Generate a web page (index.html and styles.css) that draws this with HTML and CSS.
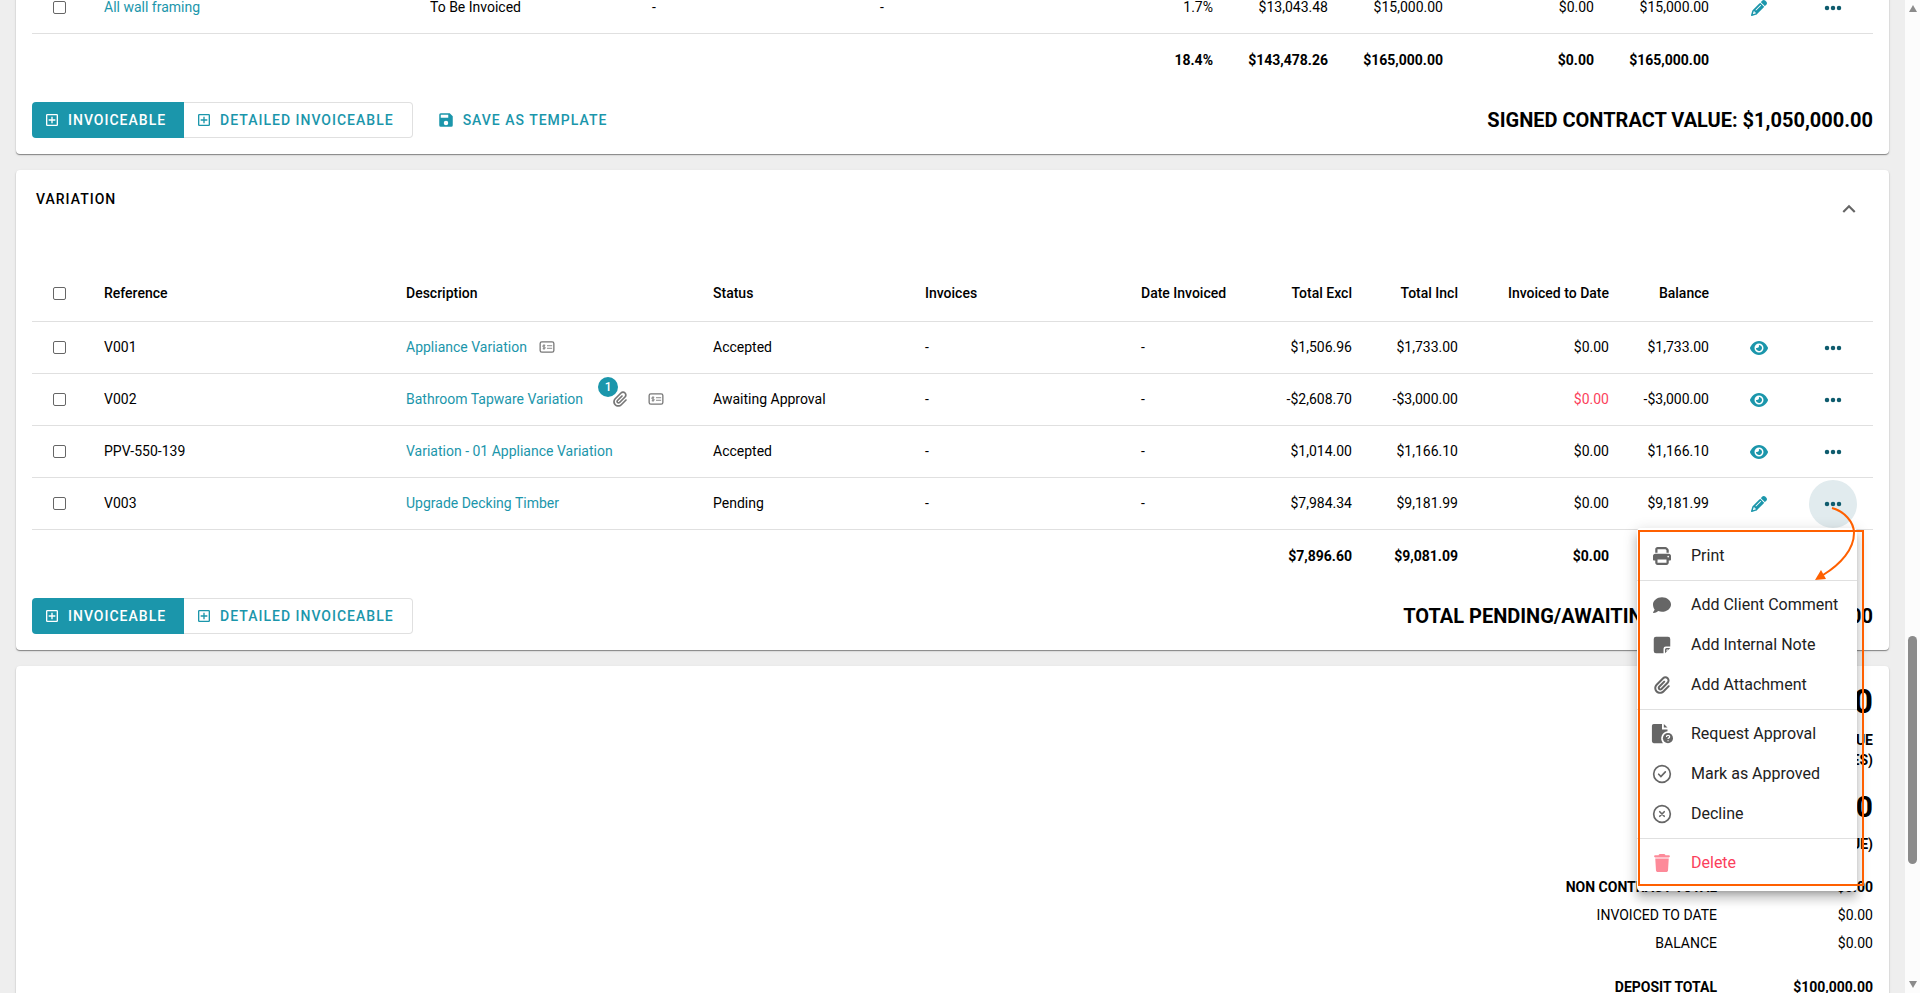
FILE: index.html
```html
<!DOCTYPE html>
<html lang="en">
<head>
    <meta charset="UTF-8">
    <meta name="viewport" content="width=device-width, initial-scale=1.0">
    <title>Quote</title>
    <link rel="stylesheet" href="styles.css">
</head>
<body>
    <!-- shared icons -->
    <svg class="sprite" aria-hidden="true">
        <symbol id="i-plus" viewBox="0 0 24 24"><path fill="currentColor" d="M5 3h14a2 2 0 0 1 2 2v14a2 2 0 0 1-2 2H5a2 2 0 0 1-2-2V5a2 2 0 0 1 2-2zm0 2v14h14V5zm6 2h2v4h4v2h-4v4h-2v-4H7v-2h4z"/></symbol>
        <symbol id="i-save" viewBox="0 0 24 24"><path fill="currentColor" d="M15 9H5V5h10m-3 14a3 3 0 0 1-3-3 3 3 0 0 1 3-3 3 3 0 0 1 3 3 3 3 0 0 1-3 3m5-16H5a2 2 0 0 0-2 2v14a2 2 0 0 0 2 2h14a2 2 0 0 0 2-2V7z"/></symbol>
        <symbol id="i-dots" viewBox="0 0 24 24"><g fill="currentColor"><circle cx="4" cy="12" r="3"/><circle cx="12" cy="12" r="3"/><circle cx="20" cy="12" r="3"/></g></symbol>
        <symbol id="i-eye" viewBox="0 0 576 512"><path fill="currentColor" d="M288 32c-80.800 0-145.500 36.800-192.600 80.600C48.600 156 17.300 208 2.500 243.700c-3.300 7.900-3.300 16.700 0 24.600C17.300 304 48.600 356 95.400 399.400C142.500 443.200 207.200 480 288 480s145.500-36.800 192.600-80.600c46.800-43.500 78.100-95.400 93-131.100c3.300-7.900 3.300-16.700 0-24.600c-14.900-35.700-46.200-87.700-93-131.100C433.500 68.800 368.800 32 288 32zM144 256a144 144 0 1 1 288 0 144 144 0 1 1-288 0zm144-64c0 35.300-28.700 64-64 64c-7.100 0-13.900-1.200-20.300-3.300c-5.500-1.800-11.900 1.600-11.700 7.400c.3 6.900 1.300 13.800 3.200 20.700c13.700 51.200 66.400 81.600 117.600 67.900s81.600-66.400 67.900-117.600c-11.100-41.500-47.800-69.400-88.600-71.100c-5.800-.2-9.200 6.100-7.400 11.700c2.100 6.400 3.300 13.200 3.300 20.300z"/></symbol>
        <symbol id="i-pencil" viewBox="0 0 512 512"><path fill="currentColor" d="M410.300 231l11.300-11.300-33.900-33.900-62.100-62.100L291.700 89.800l-11.300 11.300-22.600 22.600L58.600 322.900c-10.400 10.400-18 23.300-22.200 37.400L1 480.700c-2.500 8.400-.2 17.500 6.100 23.700s15.300 8.500 23.700 6.100l120.300-35.400c14.100-4.200 27-11.800 37.400-22.200L387.700 253.700 410.300 231zM160 399.400l-9.100 22.700c-4 3.100-8.500 5.400-13.300 6.900L59.400 452l23-78.100c1.400-4.900 3.800-9.400 6.900-13.300l22.700-9.100v32c0 8.800 7.200 16 16 16h32zM362.700 18.700L348.300 33.200 325.700 55.800 314.300 67.100l33.900 33.900 62.100 62.100 33.900 33.900 11.300-11.300 22.600-22.600 14.500-14.500c25-25 25-65.500 0-90.500L453.300 18.700c-25-25-65.500-25-90.500 0zm-47.400 168l-144 144c-6.200 6.200-16.400 6.200-22.600 0s-6.200-16.400 0-22.600l144-144c6.200-6.200 16.400-6.200 22.600 0s6.200 16.400 0 22.600z"/></symbol>
        <symbol id="i-clip" viewBox="0 0 448 512"><path fill="currentColor" d="M364.200 83.800c-24.400-24.400-64-24.400-88.400 0l-184 184c-42.100 42.100-42.100 110.300 0 152.400s110.300 42.100 152.400 0l152-152c10.900-10.900 28.700-10.900 39.600 0s10.900 28.700 0 39.600l-152 152c-64 64-167.600 64-231.600 0s-64-167.600 0-231.600l184-184c46.300-46.300 121.300-46.300 167.600 0s46.300 121.300 0 167.600l-176 176c-28.600 28.600-75 28.600-103.600 0s-28.600-75 0-103.600l144-144c10.900-10.900 28.700-10.900 39.600 0s10.900 28.700 0 39.600l-144 144c-6.700 6.700-6.700 17.700 0 24.400s17.700 6.700 24.400 0l176-176c24.400-24.400 24.400-64 0-88.400z"/></symbol>
        <symbol id="i-card" viewBox="0 0 18 14"><rect x="1" y="1" width="16" height="12" rx="2" fill="none" stroke="currentColor" stroke-width="1.500"/><path fill="none" stroke="currentColor" d="M9 5.500h6M9 8.500h6M7 5H5q-1 0-1 1t1 1h1q1 0 1 1t-1 1H4M5.500 4v6"/></symbol>
        <symbol id="i-print" viewBox="0 0 512 512"><path fill="currentColor" d="M128 0C92.700 0 64 28.700 64 64v96h64V64h226.700L384 93.300V160h64V93.300c0-17-6.700-33.300-18.700-45.300L400 18.700C388 6.700 371.700 0 354.700 0H128zm256 352v96H128v-96h256zm64 32h32c17.700 0 32-14.300 32-32v-96c0-35.300-28.700-64-64-64H64c-35.300 0-64 28.700-64 64v96c0 17.700 14.300 32 32 32h32v64c0 35.300 28.700 64 64 64h256c35.300 0 64-28.700 64-64v-64zM432 248a24 24 0 1 1 0 48 24 24 0 1 1 0-48z"/></symbol>
        <symbol id="i-comment" viewBox="0 0 512 512"><path fill="currentColor" d="M512 240c0 114.900-114.600 208-256 208c-37.100 0-72.300-6.400-104.100-17.900c-11.900 8.700-31.300 20.600-54.300 30.600C73.600 471.100 44.700 480 16 480c-6.500 0-12.300-3.900-14.800-9.900c-2.500-6-1.100-12.800 3.400-17.400c.3-.3 7-7.200 16.200-19.700c9.500-13 19.400-30.300 26.100-50.300C17.700 343 0 292.500 0 240C0 125.100 114.600 32 256 32s256 93.100 256 208z"/></symbol>
        <symbol id="i-note" viewBox="0 0 24 24"><path fill="currentColor" d="M4 1h16a3 3 0 0 1 3 3v10h-6a3 3 0 0 0-3 3v6H4a3 3 0 0 1-3-3V4a3 3 0 0 1 3-3zm12 22v-5a2 2 0 0 1 2-2h5zm2-2.500 2.500-2.500H18z" fill-rule="evenodd"/></symbol>
        <symbol id="i-request" viewBox="0 0 24 24"><path fill="currentColor" d="M3 1h9v6h6v2a8 8 0 0 0-5 13H3a2 2 0 0 1-2-2V3a2 2 0 0 1 2-2zm11 0 4 4h-4z"/><circle cx="18.500" cy="16.500" r="5.500" fill="currentColor"/><path d="M16.800 15.300q0-1.800 1.800-1.800t1.800 1.500q0 1-1.700 1.800v.7M18.600 18.700v1.200" fill="none" stroke="#fff" stroke-width="1.300"/></symbol>
        <symbol id="i-check" viewBox="0 0 24 24"><circle cx="12" cy="12" r="10" fill="none" stroke="currentColor" stroke-width="2"/><path d="m8 12.300 2.700 2.700L16 9.500" fill="none" stroke="currentColor" stroke-width="2" stroke-linecap="round"/></symbol>
        <symbol id="i-decline" viewBox="0 0 24 24"><circle cx="12" cy="12" r="10" fill="none" stroke="currentColor" stroke-width="2"/><path d="m9.300 9.300 5.400 5.400m0-5.400-5.400 5.400" fill="none" stroke="currentColor" stroke-width="2" stroke-linecap="round"/></symbol>
        <symbol id="i-trash" viewBox="0 0 448 512"><path fill="currentColor" d="M135.200 17.700L128 32H32C14.300 32 0 46.300 0 64S14.300 96 32 96h384c17.700 0 32-14.300 32-32s-14.300-32-32-32h-96l-7.200-14.300C307.400 6.800 296.300 0 284.200 0H163.800c-12.100 0-23.200 6.800-28.600 17.700zM416 128H32l21.200 339c1.600 25.300 22.600 45 47.900 45h245.800c25.300 0 46.300-19.700 47.900-45L416 128z"/></symbol>
        <symbol id="i-up" viewBox="0 0 24 24"><path fill="currentColor" d="M7.400 15.400 12 10.800l4.600 4.600L18 14l-6-6-6 6z"/></symbol>
    </svg>

    <div class="app">
        <main class="page">
            <section class="card">
                <table class="grid">
                    <colgroup>
                        <col class="c-check"><col><col class="c-state"><col class="c-inv"><col class="c-percent">
                        <col class="c-money"><col class="c-money"><col class="c-todate"><col class="c-money"><col class="c-icon"><col class="c-more">
                    </colgroup>
                    <tbody>
                        <tr>
                            <td class="check"><input type="checkbox" aria-label="Select All wall framing"></td>
                            <td><a href="#">All wall framing</a></td>
                            <td>To Be Invoiced</td>
                            <td>-</td>
                            <td class="split"><span>-</span><span>1.7%</span></td>
                            <td class="num">$13,043.48</td>
                            <td class="num">$15,000.00</td>
                            <td class="num">$0.00</td>
                            <td class="num">$15,000.00</td>
                            <td class="act"><button class="icon-btn" aria-label="Edit"><svg class="ic-16"><use href="#i-pencil"/></svg></button></td>
                            <td class="act"><button class="more" aria-label="More"><svg class="ic-18"><use href="#i-dots"/></svg></button></td>
                        </tr>
                    </tbody>
                    <tfoot>
                        <tr>
                            <td colspan="4"></td>
                            <td class="num">18.4%</td>
                            <td class="num">$143,478.26</td>
                            <td class="num">$165,000.00</td>
                            <td class="num">$0.00</td>
                            <td class="num">$165,000.00</td>
                            <td colspan="2"></td>
                        </tr>
                    </tfoot>
                </table>
                <div class="card-foot">
                    <div class="btn-group">
                        <button class="btn primary"><svg class="ic-16"><use href="#i-plus"/></svg>Invoiceable</button>
                        <button class="btn outline"><svg class="ic-16"><use href="#i-plus"/></svg>Detailed Invoiceable</button>
                    </div>
                    <button class="btn text"><svg class="ic-18"><use href="#i-save"/></svg>Save as Template</button>
                    <h2 class="total">SIGNED CONTRACT VALUE: $1,050,000.00</h2>
                </div>
            </section>

            <section class="card">
                <header class="card-head">
                    <h3>Variation</h3>
                    <button class="collapse" aria-label="Collapse"><svg class="ic-26"><use href="#i-up"/></svg></button>
                </header>
                <table class="grid">
                    <colgroup>
                        <col class="c-check"><col class="c-ref"><col><col class="c-status"><col class="c-inv2"><col class="c-date">
                        <col class="c-incl"><col class="c-todate"><col class="c-bal"><col class="c-icon"><col class="c-more">
                    </colgroup>
                    <thead>
                        <tr>
                            <th class="check"><input type="checkbox" aria-label="Select all"></th>
                            <th>Reference</th>
                            <th>Description</th>
                            <th>Status</th>
                            <th>Invoices</th>
                            <th class="split"><span>Date Invoiced</span><span>Total Excl</span></th>
                            <th class="num">Total Incl</th>
                            <th class="num">Invoiced to Date</th>
                            <th class="num">Balance</th>
                            <th></th>
                            <th></th>
                        </tr>
                    </thead>
                    <tbody>
                        <tr>
                            <td class="check"><input type="checkbox" aria-label="Select V001"></td>
                            <td>V001</td>
                            <td><div class="desc"><a href="#">Appliance Variation</a><svg class="ic-card"><use href="#i-card"/></svg></div></td>
                            <td>Accepted</td>
                            <td>-</td>
                            <td class="split"><span>-</span><span>$1,506.96</span></td>
                            <td class="num">$1,733.00</td>
                            <td class="num">$0.00</td>
                            <td class="num">$1,733.00</td>
                            <td class="act"><button class="icon-btn" aria-label="View"><svg class="ic-18"><use href="#i-eye"/></svg></button></td>
                            <td class="act"><button class="more" aria-label="More"><svg class="ic-18"><use href="#i-dots"/></svg></button></td>
                        </tr>
                        <tr>
                            <td class="check"><input type="checkbox" aria-label="Select V002"></td>
                            <td>V002</td>
                            <td><div class="desc"><a href="#">Bathroom Tapware Variation</a><span class="files"><svg class="ic-16"><use href="#i-clip"/></svg><span class="badge">1</span></span><svg class="ic-card"><use href="#i-card"/></svg></div></td>
                            <td>Awaiting Approval</td>
                            <td>-</td>
                            <td class="split"><span>-</span><span>-$2,608.70</span></td>
                            <td class="num">-$3,000.00</td>
                            <td class="num negative">$0.00</td>
                            <td class="num">-$3,000.00</td>
                            <td class="act"><button class="icon-btn" aria-label="View"><svg class="ic-18"><use href="#i-eye"/></svg></button></td>
                            <td class="act"><button class="more" aria-label="More"><svg class="ic-18"><use href="#i-dots"/></svg></button></td>
                        </tr>
                        <tr>
                            <td class="check"><input type="checkbox" aria-label="Select PPV-550-139"></td>
                            <td>PPV-550-139</td>
                            <td><a href="#">Variation - 01 Appliance Variation</a></td>
                            <td>Accepted</td>
                            <td>-</td>
                            <td class="split"><span>-</span><span>$1,014.00</span></td>
                            <td class="num">$1,166.10</td>
                            <td class="num">$0.00</td>
                            <td class="num">$1,166.10</td>
                            <td class="act"><button class="icon-btn" aria-label="View"><svg class="ic-18"><use href="#i-eye"/></svg></button></td>
                            <td class="act"><button class="more" aria-label="More"><svg class="ic-18"><use href="#i-dots"/></svg></button></td>
                        </tr>
                        <tr>
                            <td class="check"><input type="checkbox" aria-label="Select V003"></td>
                            <td>V003</td>
                            <td><a href="#">Upgrade Decking Timber</a></td>
                            <td>Pending</td>
                            <td>-</td>
                            <td class="split"><span>-</span><span>$7,984.34</span></td>
                            <td class="num">$9,181.99</td>
                            <td class="num">$0.00</td>
                            <td class="num">$9,181.99</td>
                            <td class="act"><button class="icon-btn" aria-label="Edit"><svg class="ic-16"><use href="#i-pencil"/></svg></button></td>
                            <td class="act">
                                <div class="menu-anchor">
                                    <button class="more active" aria-label="More" aria-expanded="true"><svg class="ic-18"><use href="#i-dots"/></svg></button>
                                    <div class="menu">
                                        <button><svg class="ic-18"><use href="#i-print"/></svg>Print</button>
                                        <hr>
                                        <button><svg class="ic-18"><use href="#i-comment"/></svg>Add Client Comment</button>
                                        <button><svg class="ic-18"><use href="#i-note"/></svg>Add Internal Note</button>
                                        <button><svg class="ic-18"><use href="#i-clip"/></svg>Add Attachment</button>
                                        <hr>
                                        <button><svg class="ic-22"><use href="#i-request"/></svg>Request Approval</button>
                                        <button><svg class="ic-20"><use href="#i-check"/></svg>Mark as Approved</button>
                                        <button><svg class="ic-20"><use href="#i-decline"/></svg>Decline</button>
                                        <hr>
                                        <button class="danger"><svg class="ic-18"><use href="#i-trash"/></svg>Delete</button>
                                    </div>
                                    <!-- callout box and arrow over the menu -->
                                    <svg class="callout" viewBox="0 0 240 410" aria-hidden="true">
                                        <rect x="10" y="51" width="224" height="354" fill="none" stroke="#ff6000" stroke-width="2"/>
                                        <path d="M203 28C215 31 225 42 225 53C225 69 212 84 194 95" fill="none" stroke="#ff6000" stroke-width="2"/>
                                        <path d="M186 100l6-10 5 9z" fill="#ff6000"/>
                                    </svg>
                                </div>
                            </td>
                        </tr>
                    </tbody>
                    <tfoot>
                        <tr>
                            <td colspan="5"></td>
                            <td class="num">$7,896.60</td>
                            <td class="num">$9,081.09</td>
                            <td class="num">$0.00</td>
                            <td></td>
                            <td colspan="2"></td>
                        </tr>
                    </tfoot>
                </table>
                <div class="card-foot">
                    <div class="btn-group">
                        <button class="btn primary"><svg class="ic-16"><use href="#i-plus"/></svg>Invoiceable</button>
                        <button class="btn outline"><svg class="ic-16"><use href="#i-plus"/></svg>Detailed Invoiceable</button>
                    </div>
                    <h2 class="total">TOTAL PENDING/AWAITING APPROVAL: -$3,000.00</h2>
                </div>
            </section>

            <section class="card summary">
                <p class="big">$1,050,000.00</p>
                <p class="caption">CONTRACT VALUE<br>(INCL TAXES)</p>
                <p class="mid">$0.00</p>
                <p class="caption">(BALANCE DUE)</p>
                <dl>
                    <div class="strong"><dt>NON CONTRACT TOTAL</dt><dd>$0.00</dd></div>
                    <div><dt>INVOICED TO DATE</dt><dd>$0.00</dd></div>
                    <div><dt>BALANCE</dt><dd>$0.00</dd></div>
                    <div class="strong gap"><dt>DEPOSIT TOTAL</dt><dd>$100,000.00</dd></div>
                </dl>
            </section>
        </main>
        <div class="scrollbar">
            <span class="arrow-up"></span>
            <span class="thumb"></span>
            <span class="arrow-down"></span>
        </div>
    </div>
</body>
</html>
```
FILE: styles.css
```css
* {
    box-sizing: border-box;
}
body {
    font-family: Roboto, "Liberation Sans", sans-serif;
    font-size: 14px;
    line-height: 20px;
    margin: 0;
    background-color: #eee;
    color: #000;
}
h2, h3, p, dl, dd {
    margin: 0;
}
a {
    color: #1b96ab;
    text-decoration: none;
}
button {
    font: inherit;
    color: inherit;
    background: none;
    border: 0;
    padding: 0;
    cursor: pointer;
}
svg {
    flex: none;
}
.sprite {
    position: absolute;
    width: 0;
    height: 0;
}
.ic-16 { width: 16px; height: 16px; }
.ic-18 { width: 18px; height: 18px; }
.ic-20 { width: 20px; height: 20px; }
.ic-22 { width: 22px; height: 22px; }
.ic-26 { width: 26px; height: 26px; }
.ic-card { width: 16px; height: 12px; }

.app {
    display: flex;
    height: 100vh;
    overflow: hidden;
}
/* first card is scrolled partly out of view */
.page {
    flex: 1;
    min-width: 0;
    display: flex;
    flex-direction: column;
    gap: 16px;
    padding: 0 16px;
    margin-top: -34px;
}
.card {
    flex: none;
    background-color: #fff;
    border-radius: 4px;
    padding: 16px;
    box-shadow: 0 1px 1px rgba(0, 0, 0, 0.4), 0 1px 3px rgba(0, 0, 0, 0.1);
}
.card-head {
    display: flex;
    justify-content: space-between;
    height: 79px;
    padding: 3px 4px 0;
}
.card-head h3 {
    font-size: 14px;
    font-weight: 500;
    letter-spacing: 1px;
    text-transform: uppercase;
}
.collapse {
    width: 40px;
    height: 40px;
    color: #666;
}
.collapse svg {
    display: block;
    margin: auto;
}

/* tables */
.grid {
    width: 100%;
    table-layout: fixed;
    border-collapse: separate;
    border-spacing: 0;
}
.grid th, .grid td {
    height: 52px;
    padding: 0 16px;
    text-align: left;
    border-bottom: 1px solid #e0e0e0;
    white-space: nowrap;
}
.grid tbody td {
    padding-bottom: 2px;
}
.grid th {
    height: 57px;
    font-weight: 500;
}
.grid .num {
    text-align: right;
}
.grid .negative {
    color: #fb3f5c;
}
.grid tfoot td {
    border-bottom: 0;
    font-weight: 700;
}
.grid .check, .grid .act {
    padding: 0;
    text-align: center;
}
.split span:last-child {
    float: right;
}
.check input {
    appearance: none;
    display: block;
    width: 13px;
    height: 13px;
    margin: 0 auto 0 21px;
    border: 1px solid #666;
    border-radius: 2px;
}
.c-check { width: 56px; }
.c-state { width: 222px; }
.c-inv { width: 228px; }
.c-percent { width: 365px; }
.c-money { width: 115px; }
.c-todate { width: 151px; }
.c-icon { width: 68px; }
.c-more { width: 80px; }
.c-ref { width: 302px; }
.c-status { width: 212px; }
.c-inv2 { width: 216px; }
.c-date { width: 243px; }
.c-incl { width: 106px; }
.c-bal { width: 100px; }

.desc {
    display: flex;
    align-items: center;
    gap: 12px;
}
.desc svg {
    color: #777;
}
.files {
    position: relative;
    display: flex;
    padding: 0 8px 0 17px;
}
.badge {
    position: absolute;
    top: -14px;
    left: 3px;
    width: 20px;
    height: 20px;
    border-radius: 50%;
    background-color: #1b96ab;
    color: #fff;
    font-size: 12px;
    font-weight: 500;
    text-align: center;
}
.icon-btn, .more {
    display: flex;
    align-items: center;
    justify-content: center;
    width: 48px;
    height: 48px;
    margin: 0 auto;
    border-radius: 50%;
    color: #1b96ab;
}
.more {
    color: #0f5c6e;
}
.more.active {
    background-color: #e1ebee;
}

/* row menu */
.menu-anchor {
    position: relative;
    width: 48px;
    margin: 0 auto;
}
.menu {
    position: absolute;
    z-index: 2;
    top: 100%;
    right: 0;
    width: 220px;
    padding: 8px 0;
    background-color: #fff;
    border-radius: 4px;
    box-shadow: 0 5px 5px -3px rgba(0, 0, 0, 0.2), 0 8px 10px 1px rgba(0, 0, 0, 0.14), 0 3px 14px 2px rgba(0, 0, 0, 0.12);
}
.menu button {
    display: grid;
    grid-template-columns: 22px 1fr;
    align-items: center;
    gap: 18px;
    width: 100%;
    height: 40px;
    padding: 0 14px;
    font-size: 16px;
    text-align: left;
    color: #212121;
}
.menu svg {
    justify-self: center;
    color: #666;
}
.menu .danger {
    color: #fb3f5c;
}
.menu .danger svg {
    color: #fd8a99;
}
.menu hr {
    height: 1px;
    margin: 4px 0;
    border: 0;
    background-color: #e0e0e0;
}
.callout {
    position: absolute;
    z-index: 3;
    top: 0;
    left: -180px;
    width: 240px;
    height: 410px;
    pointer-events: none;
}

/* card footer */
.card-foot {
    display: flex;
    align-items: center;
    padding-top: 16px;
}
.btn-group {
    display: flex;
}
.btn {
    display: flex;
    align-items: center;
    gap: 8px;
    height: 36px;
    padding: 0 18px 0 12px;
    font-weight: 500;
    letter-spacing: 1px;
    text-transform: uppercase;
    color: #1b96ab;
}
.btn.primary {
    background-color: #1b96ab;
    color: #fff;
    border-radius: 4px 0 0 4px;
}
.btn.outline {
    border: 1px solid #e0e0e0;
    border-left: 0;
    border-radius: 0 4px 4px 0;
}
.btn.text {
    margin-left: 12px;
}
.total {
    margin-left: auto;
    font-size: 20px;
    line-height: 32px;
    font-weight: 700;
}

/* summary */
.summary {
    padding-top: 15px;
    text-align: right;
}
.summary .big {
    font-size: 34px;
    line-height: 40px;
    font-weight: 700;
}
.summary .mid {
    padding-top: 19px;
    font-size: 30px;
    line-height: 36px;
    font-weight: 700;
}
.summary .caption {
    padding-top: 9px;
    font-weight: 700;
}
.summary dl {
    padding-top: 19px;
}
.summary dl div {
    display: flex;
    justify-content: flex-end;
    height: 28px;
    align-items: center;
}
.summary dd {
    width: 156px;
}
.summary .strong {
    font-weight: 700;
}
.summary .gap {
    margin-top: 16px;
}

/* scrollbar */
.scrollbar {
    flex: none;
    display: flex;
    flex-direction: column;
    align-items: center;
    width: 15px;
    padding: 5px 0;
    background-color: #fcfcfc;
}
.arrow-up, .arrow-down {
    border: 4px solid transparent;
    border-bottom: 7px solid #8b8b8b;
    border-top: 0;
}
.arrow-down {
    margin-top: auto;
    border-top: 7px solid #8b8b8b;
    border-bottom: 0;
}
.thumb {
    width: 9px;
    height: 228px;
    margin-top: 624px;
    border-radius: 5px;
    background-color: #8b8b8b;
}
```
